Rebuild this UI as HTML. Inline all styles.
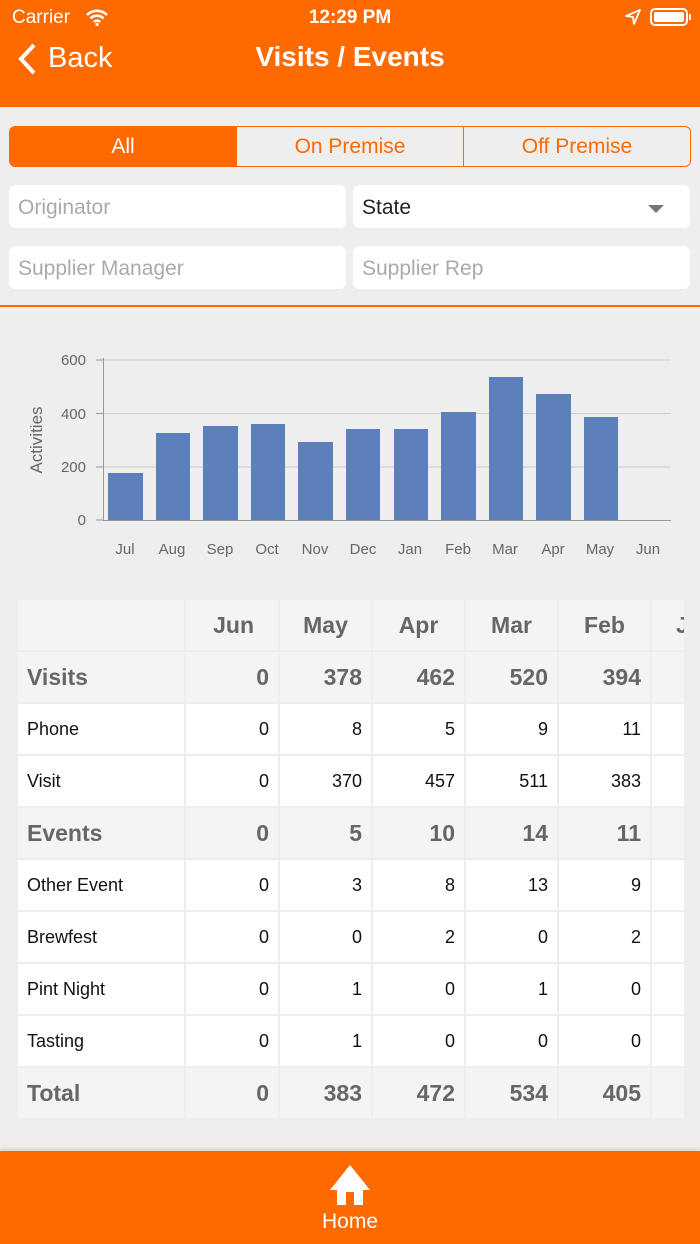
<!DOCTYPE html>
<html><head><meta charset="utf-8"><style>
*{box-sizing:border-box;margin:0;padding:0}
body{width:700px;height:1244px;background:#eeeeee;font-family:"Liberation Sans",sans-serif;position:relative;overflow:hidden}
.hdr{position:absolute;left:0;top:0;width:700px;height:107px;background:#ff6a00;color:#fff}
.abs{position:absolute}
.seg{position:absolute;top:126px;left:9px;width:682px;height:41px;border:1.5px solid #ff6a00;border-radius:6px;display:flex;overflow:hidden}
.seg div{flex:1;display:flex;align-items:center;justify-content:center;font-size:21px;color:#ff6a00;border-left:1.5px solid #ff6a00}
.seg div:first-child{background:#ff6a00;color:#fff;border-left:none}
.inp{position:absolute;height:43px;width:337px;background:#fff;border-radius:7px;font-size:21px;color:#aaa;padding:11px 9px}
table{position:relative;left:-2px;top:-2px;border-collapse:separate;border-spacing:2px 2px;table-layout:fixed;width:729px}
td{height:50px;background:#fff;text-align:right;padding-right:9px;font-size:18px;color:#111;white-space:nowrap}
td:first-child{text-align:left;padding-left:9px}
tr.b td{background:#f4f4f4;font-weight:bold;font-size:23px;color:#666}
tr.h td{background:#f4f4f4;font-weight:bold;font-size:23px;color:#666;padding-right:0;text-align:center}
.wrap{position:absolute;left:18px;top:600px;width:666px;height:518px;overflow:hidden}
</style></head><body>
<div class="hdr">
 <div class="abs" style="left:12px;top:7px;font-size:19px">Carrier</div>
 <svg class="abs" style="left:85px;top:8px" width="24" height="18" viewBox="0 0 24 18"><path d="M2 7a14 14 0 0 1 20 0M5.5 10.5a9 9 0 0 1 13 0M9 14a4 4 0 0 1 6 0" stroke="#fff" stroke-width="2.6" fill="none"/><circle cx="12" cy="16.5" r="1.6" fill="#fff"/></svg>
 <div class="abs" style="left:0;width:700px;text-align:center;top:7px;font-size:19px;font-weight:bold">12:29 PM</div>
 <svg class="abs" style="left:625px;top:9px" width="16" height="16" viewBox="0 0 16 16"><path d="M15 1L1 7l7 1 1 7z" stroke="#fff" stroke-width="1.8" fill="none" stroke-linejoin="round"/></svg>
 <div class="abs" style="left:650px;top:8px;width:38px;height:18px;border:2px solid #fff;border-radius:5px;padding:2px"><div style="background:#fff;height:100%;border-radius:2px"></div></div>
 <div class="abs" style="left:689px;top:14px;width:2px;height:6px;background:#fff"></div>
 <svg class="abs" style="left:16px;top:42px" width="22" height="34" viewBox="0 0 22 34"><path d="M18 3L5 17l13 14" stroke="#fff" stroke-width="4" fill="none"/></svg>
 <div class="abs" style="left:48px;top:42px;font-size:29px">Back</div>
 <div class="abs" style="left:0;width:700px;text-align:center;top:41px;font-size:28px;font-weight:bold">Visits / Events</div>
</div>
<div class="seg"><div>All</div><div>On Premise</div><div>Off Premise</div></div>
<div class="inp" style="left:9px;top:185px">Originator</div>
<div class="inp" style="left:353px;top:185px;color:#222">State<span style="position:absolute;right:26px;top:20px;border:8px solid transparent;border-top:8px solid #777;border-bottom:none"></span></div>
<div class="inp" style="left:9px;top:246px">Supplier Manager</div>
<div class="inp" style="left:353px;top:246px">Supplier Rep</div>
<div class="abs" style="left:0;top:305px;width:700px;height:2px;background:#ff6a00"></div>
<svg class="abs" style="left:0;top:340px" width="700" height="230" viewBox="0 340 700 230" font-family="Liberation Sans" font-size="15" fill="#666">
 <g stroke="#ccc" stroke-width="1"><line x1="103" x2="671" y1="360" y2="360"/><line x1="103" x2="671" y1="413.5" y2="413.5"/><line x1="103" x2="671" y1="467" y2="467"/></g>
 <line x1="103" x2="671" y1="520.5" y2="520.5" stroke="#999"/><line x1="103.5" x2="103.5" y1="358" y2="521" stroke="#999"/>
 <g stroke="#999"><line x1="96" x2="103" y1="360" y2="360"/><line x1="96" x2="103" y1="413.5" y2="413.5"/><line x1="96" x2="103" y1="467" y2="467"/><line x1="96" x2="103" y1="520" y2="520"/></g>
 <g text-anchor="end"><text x="86" y="365">600</text><text x="86" y="419">400</text><text x="86" y="472">200</text><text x="86" y="525">0</text></g>
 <text transform="translate(42 440) rotate(-90)" text-anchor="middle" font-size="17">Activities</text>
 <g fill="#5b80bc">
 <rect x="108" y="473" width="35" height="47"/><rect x="156" y="433" width="34" height="87"/><rect x="203" y="426" width="35" height="94"/><rect x="251" y="424" width="34" height="96"/><rect x="298" y="442" width="35" height="78"/><rect x="346" y="429" width="34" height="91"/><rect x="394" y="429" width="34" height="91"/><rect x="441" y="412" width="35" height="108"/><rect x="489" y="377" width="34" height="143"/><rect x="536" y="394" width="35" height="126"/><rect x="584" y="417" width="34" height="103"/>
 </g>
 <g text-anchor="middle"><text x="125" y="554">Jul</text><text x="172" y="554">Aug</text><text x="220" y="554">Sep</text><text x="267" y="554">Oct</text><text x="315" y="554">Nov</text><text x="363" y="554">Dec</text><text x="410" y="554">Jan</text><text x="458" y="554">Feb</text><text x="505" y="554">Mar</text><text x="553" y="554">Apr</text><text x="600" y="554">May</text><text x="648" y="554">Jun</text></g>
</svg>
<div class="wrap"><table>
<colgroup><col style="width:166px"><col style="width:92px"><col style="width:91px"><col style="width:91px"><col style="width:91px"><col style="width:91px"><col style="width:91px"></colgroup>
<tr class="h"><td></td><td style="text-align:right;padding-right:24px">Jun</td><td>May</td><td>Apr</td><td>Mar</td><td>Feb</td><td style="text-align:left;padding-left:24px">Jan</td></tr>
<tr class="b"><td>Visits</td><td>0</td><td>378</td><td>462</td><td>520</td><td>394</td><td></td></tr>
<tr><td>Phone</td><td>0</td><td>8</td><td>5</td><td>9</td><td>11</td><td></td></tr>
<tr><td>Visit</td><td>0</td><td>370</td><td>457</td><td>511</td><td>383</td><td></td></tr>
<tr class="b"><td>Events</td><td>0</td><td>5</td><td>10</td><td>14</td><td>11</td><td></td></tr>
<tr><td>Other Event</td><td>0</td><td>3</td><td>8</td><td>13</td><td>9</td><td></td></tr>
<tr><td>Brewfest</td><td>0</td><td>0</td><td>2</td><td>0</td><td>2</td><td></td></tr>
<tr><td>Pint Night</td><td>0</td><td>1</td><td>0</td><td>1</td><td>0</td><td></td></tr>
<tr><td>Tasting</td><td>0</td><td>1</td><td>0</td><td>0</td><td>0</td><td></td></tr>
<tr class="b"><td>Total</td><td>0</td><td>383</td><td>472</td><td>534</td><td>405</td><td></td></tr>
</table></div>
<div class="abs" style="left:0;top:1151px;width:700px;height:93px;background:#ff6a00;box-shadow:0 -2px 4px rgba(0,0,0,.12)">
 <svg class="abs" style="left:329px;top:12px" width="42" height="42" viewBox="0 0 42 42"><path d="M21 2L1 27h7v15h9V29h8v13h9V27h7z" fill="#fff"/></svg>
 <div class="abs" style="left:0;width:700px;text-align:center;top:59px;font-size:21px;color:#fff">Home</div>
</div>
</body></html>
